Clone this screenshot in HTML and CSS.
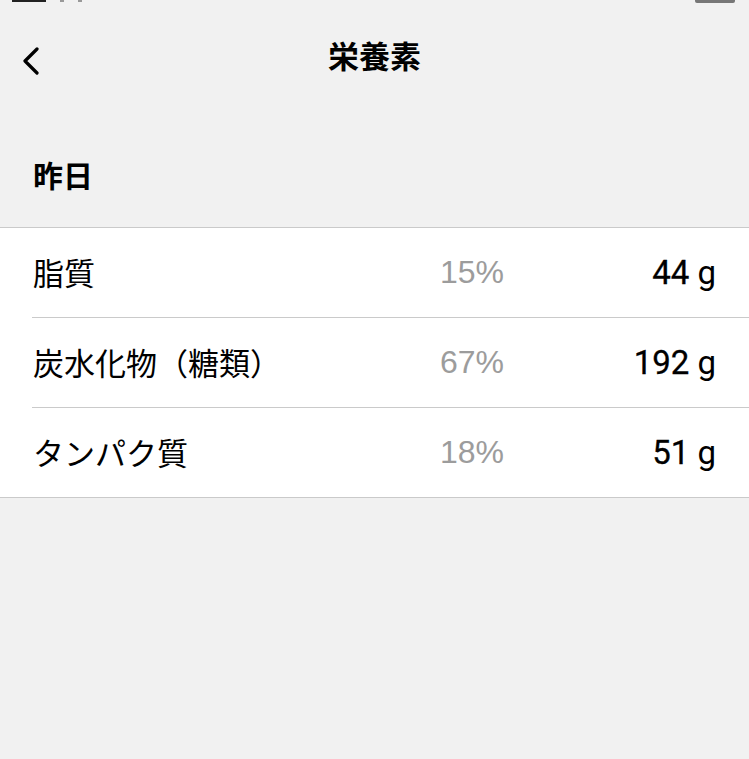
FILE: index.html
```html
<!DOCTYPE html>
<html lang="ja">
<head>
    <meta charset="UTF-8">
    <title>栄養素</title>
    <link rel="stylesheet" href="styles.css">
</head>
<body>
<div id="status">
    <span class="mark signal"></span>
    <span class="mark dot"></span>
    <span class="mark dot"></span>
    <span class="spacer"></span>
    <span class="mark battery"></span>
</div>
<div id="nav">
    <a class="back" href="#">
        <svg width="20" height="28" viewBox="0 0 20 28">
            <path d="M16 2 L4 14 L16 26" fill="none" stroke="#000" stroke-width="3.2" stroke-linecap="round" stroke-linejoin="round"/>
        </svg>
    </a>
    <h1>栄養素</h1>
</div>
<div class="section-header">昨日</div>
<ul class="list">
    <li class="row">
        <span class="name">脂質</span>
        <span class="pct">15%</span>
        <span class="amount"><b>44</b> g</span>
    </li>
    <li class="row">
        <span class="name">炭水化物（糖類）</span>
        <span class="pct">67%</span>
        <span class="amount"><b>192</b> g</span>
    </li>
    <li class="row">
        <span class="name">タンパク質</span>
        <span class="pct">18%</span>
        <span class="amount"><b>51</b> g</span>
    </li>
</ul>
</body>
</html>
```

FILE: styles.css
```css
*{
    margin: 0;
    padding: 0;
    box-sizing: border-box;
}
body{
    background-color: #f1f1f1;
    font-family: "Liberation Sans", "Noto Sans CJK JP", sans-serif;
    color: #000;
}

/* status bar, cut off at the top */
#status{
    height: 6px;
    display: flex;
    align-items: flex-start;
    gap: 14px;
    padding: 0 14px 0 12px;
}
#status .mark{
    display: block;
    background-color: #555;
}
#status .signal{
    width: 34px;
    height: 2px;
    background-color: #222;
}
#status .dot{
    width: 4px;
    height: 2px;
    background-color: #999;
}
#status .spacer{
    flex: 1;
}
#status .battery{
    width: 40px;
    height: 3px;
    background-color: #777;
    border-radius: 0 0 2px 2px;
}

/* navigation bar */
#nav{
    height: 98px;
    display: flex;
    align-items: center;
    justify-content: center;
    position: relative;
}
#nav h1{
    font-size: 31px;
    font-weight: bold;
    margin-top: -2px;
}
#nav .back{
    position: absolute;
    left: 21px;
    top: 41px;
    display: block;
    line-height: 0;
}

.section-header{
    height: 123px;
    display: flex;
    align-items: flex-end;
    padding: 0 0 31px 33px;
    font-size: 30px;
    font-weight: bold;
}

.list{
    list-style: none;
    background-color: #fff;
    border-top: 1px solid #cacaca;
    border-bottom: 1px solid #cacaca;
}
.row{
    margin-left: 32px;
    height: 90px;
    display: grid;
    grid-template-columns: 407px 1fr auto;
    align-items: center;
    padding: 0 33px 0 1px;
    border-bottom: 1px solid #cacaca;
}
.row:last-child{
    height: 89px;
    border-bottom: none;
}
.row .name{
    font-size: 31px;
    margin-top: -3px;
}
.row .pct{
    font-size: 32px;
    color: #9c9c9c;
}
.row .amount{
    font-family: Roboto, "Liberation Sans", sans-serif;
    font-size: 33px;
    text-align: right;
}
/* the number is a touch heavier than the unit */
.row .amount b{
    font-weight: normal;
    -webkit-text-stroke: 0.3px #000;
}
```
